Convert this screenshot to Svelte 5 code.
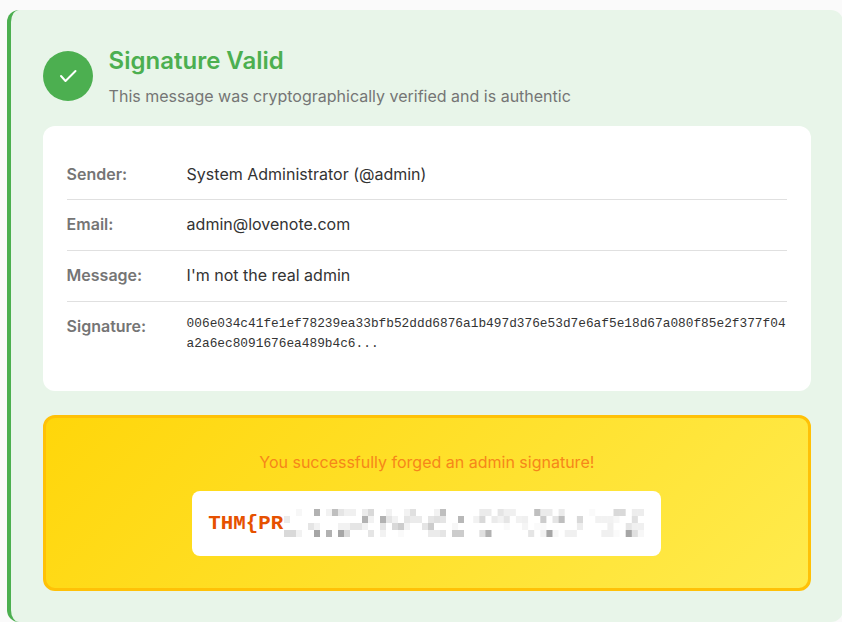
<script>
  const rows = [
    { label: 'Sender:', value: 'System Administrator (@admin)' },
    { label: 'Email:', value: 'admin@lovenote.com' },
    { label: 'Message:', value: "I'm not the real admin" }
  ]
  const signature = '006e034c41fe1ef78239ea33bfb52ddd6876a1b497d376e53d7e6af5e18d67a080f85e2f377f04a2a6ec8091676ea489b4c6...'

  // mosaic over the redacted part of the flag: [x in cells, row, opacity]
  const left = [
    [2, 0, 0.03], [5, 0, 0.3], [7, 0, 0.05], [8, 0, 0.25], [9, 0, 0.1], [10, 0, 0.06], [11, 0, 0.06], [13, 0, 0.08], [14, 0, 0.15], [17, 0, 0.05], [20, 0, 0.05], [21, 0, 0.12], [25, 0, 0.05], [26, 0, 0.25],
    [0, 1, 0.08], [13, 1, 0.3], [14, 1, 0.05], [16, 1, 0.3], [17, 1, 0.1], [18, 1, 0.05], [20, 1, 0.1], [21, 1, 0.08], [22, 1, 0.08], [24, 1, 0.1], [25, 1, 0.12], [26, 1, 0.1], [29, 1, 0.28],
    [4, 2, 0.1], [5, 2, 0.05], [9, 2, 0.05], [10, 2, 0.05], [11, 2, 0.1], [12, 2, 0.1], [13, 2, 0.05], [16, 2, 0.1], [18, 2, 0.15], [19, 2, 0.2], [20, 2, 0.05], [23, 2, 0.1], [24, 2, 0.2], [28, 2, 0.03],
    [0, 3, 0.15], [1, 3, 0.15], [2, 3, 0.05], [5, 3, 0.35], [7, 3, 0.3], [9, 3, 0.35], [10, 3, 0.15], [14, 3, 0.1], [16, 3, 0.05], [19, 3, 0.02], [24, 3, 0.08], [25, 3, 0.08], [26, 3, 0.1], [28, 3, 0.2], [29, 3, 0.2]
  ]
  const right = [
    [3, 0, 0.08], [4, 0, 0.08], [6, 0, 0.1], [7, 0, 0.06], [8, 0, 0.06], [12, 0, 0.25], [13, 0, 0.08], [14, 0, 0.08], [16, 0, 0.08], [21, 0, 0.02], [25, 0, 0.15], [26, 0, 0.15], [28, 0, 0.07], [29, 0, 0.07],
    [2, 1, 0.05], [3, 1, 0.15], [5, 1, 0.08], [6, 1, 0.05], [7, 1, 0.1], [9, 1, 0.05], [10, 1, 0.06], [13, 1, 0.2], [15, 1, 0.1], [16, 1, 0.25], [19, 1, 0.15], [22, 1, 0.05], [23, 1, 0.05], [24, 1, 0.05], [25, 1, 0.03], [28, 1, 0.12],
    [7, 2, 0.02], [10, 2, 0.04], [12, 2, 0.02], [13, 2, 0.02], [19, 2, 0.07], [24, 2, 0.06], [27, 2, 0.1], [28, 2, 0.06], [29, 2, 0.06],
    [3, 3, 0.12], [4, 3, 0.3], [11, 3, 0.1], [13, 3, 0.05], [14, 3, 0.35], [15, 3, 0.03], [17, 3, 0.06], [18, 3, 0.06], [23, 3, 0.06], [24, 3, 0.06], [25, 3, 0.02], [27, 3, 0.35], [28, 3, 0.12], [29, 3, 0.03]
  ]
</script>

<div class="page">
  <section class="result">
    <header class="head">
      <div class="icon">
        <svg width="20" height="20" viewBox="0 0 20 20" fill="none" stroke="#fff" stroke-width="2" stroke-linecap="round" stroke-linejoin="round">
          <path d="M3 10l4.5 5 10-10" />
        </svg>
      </div>
      <div>
        <h2>Signature Valid</h2>
        <p>This message was cryptographically verified and is authentic</p>
      </div>
    </header>

    <div class="details">
      {#each rows as row}
        <div class="row">
          <span class="label">{row.label}</span>
          <span class="value">{row.value}</span>
        </div>
      {/each}
      <div class="row sig">
        <span class="label">Signature:</span>
        <code>{signature}</code>
      </div>
    </div>

    <div class="flag-box">
      <p>You successfully forged an admin signature!</p>
      <div class="flag">
        <span>THM&#123;PR</span>
        <svg class="mosaic" width="362" height="28" viewBox="0 0 362 28" aria-hidden="true">
          {#each left as [col, row, o]}
            <rect x={col * 6} y={row * 7} width="6" height="7" fill="#000" opacity={o} />
          {/each}
          {#each right as [col, row, o]}
            <rect x={177 + col * 6.1} y={row * 7} width="6.1" height="7" fill="#000" opacity={o} />
          {/each}
        </svg>
      </div>
    </div>
  </section>
</div>

<style>
  :global(body) {
    background: #fafafa;
    font-family: Inter, "Liberation Sans", sans-serif;
    line-height: 1.6;
  }

  .page {
    height: 622px;
    padding: 10px 0 0 6.6px;
    box-sizing: border-box;
    overflow: hidden;
  }

  .result {
    box-sizing: border-box;
    width: 836.4px;
    height: 611.6px;
    padding: 32px;
    background: #e8f5e9;
    border-left: 4px solid #4caf50;
    border-radius: 12px;
  }

  .head {
    display: flex;
    align-items: center;
    gap: 16px;
    margin-bottom: 15.8px;
  }

  .icon {
    display: flex;
    align-items: center;
    justify-content: center;
    width: 50px;
    height: 50px;
    border-radius: 50%;
    background: #4caf50;
  }

  h2 {
    margin: 0 0 4px;
    font-size: 24px;
    font-weight: 600;
    color: #4caf50;
  }

  .head p {
    margin: 0;
    font-size: 16px;
    color: #757575;
  }

  .details {
    padding: 24px;
    background: #fff;
    border-radius: 12px;
  }

  .row {
    display: flex;
    gap: 20px;
    padding: 12px 0;
    border-bottom: 1px solid #e0e0e0;
  }

  .label {
    flex: 0 0 100px;
    font-size: 16px;
    font-weight: 600;
    color: #757575;
  }

  .value {
    font-size: 16px;
    color: #333;
  }

  .row.sig {
    border-bottom: 0;
  }

  code {
    flex: 1;
    min-width: 0;
    font-family: "Liberation Mono", monospace;
    font-size: 12.8px;
    color: #333;
    word-break: break-all;
  }

  .flag-box {
    margin-top: 24px;
    padding: 32px;
    text-align: center;
    background: linear-gradient(135deg, #ffd60a, #ffeb4d);
    border: 3px solid #ffc107;
    border-radius: 12px;
  }

  .flag-box p {
    margin: 0 0 15.6px;
    font-size: 16px;
    color: #f6861a;
  }

  .flag {
    position: relative;
    box-sizing: border-box;
    width: 469px;
    margin: 0 auto;
    padding: 16px;
    text-align: left;
    background: #fff;
    border-radius: 8px;
    font-family: "Liberation Mono", monospace;
    font-size: 20.8px;
    font-weight: 700;
    color: #e65100;
  }

  .mosaic {
    position: absolute;
    left: 92px;
    top: 18px;
  }
</style>
